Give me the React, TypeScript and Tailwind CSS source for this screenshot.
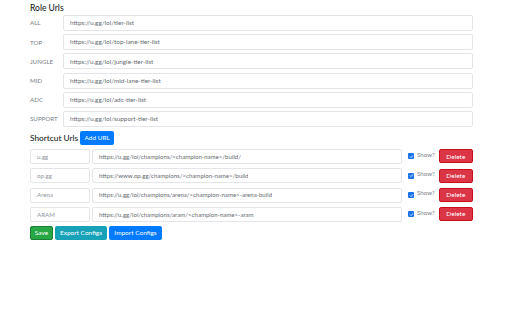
const roles = [
    { label: 'ALL', url: 'https://u.gg/lol/tier-list' },
    { label: 'TOP', url: 'https://u.gg/lol/top-lane-tier-list' },
    { label: 'JUNGLE', url: 'https://u.gg/lol/jungle-tier-list' },
    { label: 'MID', url: 'https://u.gg/lol/mid-lane-tier-list' },
    { label: 'ADC', url: 'https://u.gg/lol/adc-tier-list' },
    { label: 'SUPPORT', url: 'https://u.gg/lol/support-tier-list' },
];

const shortcuts = [
    { name: 'u.gg', url: 'https://u.gg/lol/champions/<champion-name>/build/' },
    { name: 'op.gg', url: 'https://www.op.gg/champions/<champion-name>/build' },
    { name: 'Arena', url: 'https://u.gg/lol/champions/arena/<champion-name>-arena-build' },
    { name: 'ARAM', url: 'https://u.gg/lol/champions/aram/<champion-name>-aram' },
];

const Field = ({ value, className }: { value: string; className: string }) => (
    <div className={`flex items-center rounded-[2px] border border-[#e3e5e8] bg-white px-[6px] ${className}`}>
        <span className="truncate">{value}</span>
    </div>
);

const Check = () => (
    <span className="flex h-[6px] w-[6px] items-center justify-center rounded-[1px] bg-[#1a73e8]">
        <svg viewBox="0 0 10 10" className="h-[5px] w-[5px]">
            <path d="M2 5.2l2 2 4-4.4" fill="none" stroke="#fff" strokeWidth={1.6} />
        </svg>
    </span>
);

export default function App() {
    return (
        <div className="h-[320px] w-[512px] bg-white pl-[30px] pt-[2px] text-[#212529]" style={{ fontFamily: '"Segoe UI", Lato, "Noto Sans", sans-serif' }}>
            <div className="h-[13px] text-[8.5px] leading-[13px] font-medium">Role Urls</div>
            <div className="flex flex-col gap-[3.2px]">
                {roles.map(r => (
                    <div key={r.label} className="flex items-center">
                        <div className="w-[33px] text-[6.2px] text-[#7a8188]">{r.label}</div>
                        <Field value={r.url} className="h-[16px] w-[410px] text-[6.4px] text-[#666c72]" />
                    </div>
                ))}
            </div>
            <div className="mt-[4px] flex items-center gap-[2px]">
                <span className="text-[8.3px] font-medium">Shortcut Urls</span>
                <button className="flex h-[14px] w-[34px] items-center justify-center rounded-[2px] bg-[#007bff] text-[6.5px] text-white">Add URL</button>
            </div>
            <div className="mt-[4px] flex flex-col gap-[4.3px]">
                {shortcuts.map(s => (
                    <div key={s.name} className="flex items-center">
                        <Field value={s.name} className="h-[15px] w-[60px] text-[6.2px] text-[#90969c]" />
                        <Field value={s.url} className="ml-[2px] h-[15px] w-[310px] text-[6.1px] text-[#666c72]" />
                        <span className="ml-[6px]">
                            <Check />
                        </span>
                        <span className="ml-[3px] -mt-[4px] text-[6.2px] text-[#7a8188]">Show?</span>
                        <button className="ml-[4px] flex h-[14px] w-[34px] items-center justify-center rounded-[2px] border border-[#c80f1c] bg-[#dc3545] text-[6.5px] text-white">Delete</button>
                    </div>
                ))}
            </div>
            <div className="mt-[4px] flex gap-[2px]">
                <button className="flex h-[14px] w-[23px] items-center justify-center rounded-[2px] border border-[#1e7e34] bg-[#28a745] text-[6.5px] text-white">Save</button>
                <button className="flex h-[14px] w-[52px] items-center justify-center rounded-[2px] bg-[#17a2b8] text-[6.5px] text-white">Export Configs</button>
                <button className="flex h-[14px] w-[53px] items-center justify-center rounded-[2px] bg-[#007bff] text-[6.5px] text-white">Import Configs</button>
            </div>
        </div>
    );
}
